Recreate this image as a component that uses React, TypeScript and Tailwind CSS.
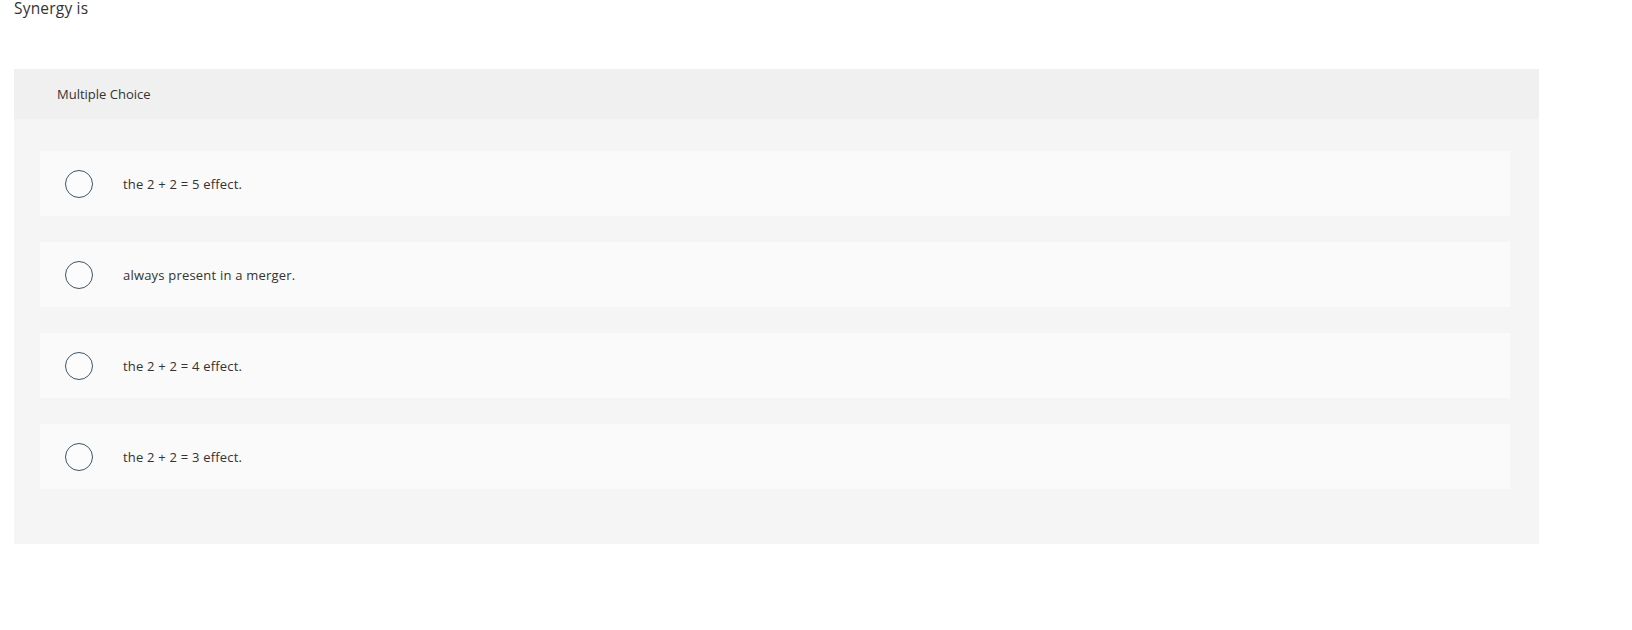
const choices = [
  'the 2 + 2 = 5 effect.',
  'always present in a merger.',
  'the 2 + 2 = 4 effect.',
  'the 2 + 2 = 3 effect.',
]

function Radio() {
  return (
    <span className="w-[28px] h-[28px] rounded-full border-[1.5px] border-[#3d5566] bg-[#fcfcfc] flex-shrink-0" />
  )
}

export default function App() {
  return (
    <div className="w-[1632px] h-[630px] bg-white text-[#333] font-['Open_Sans','Lato',sans-serif]">
      <p className="pl-[14px] text-[15.5px] leading-[15px] pt-[1px] tracking-[0.2px]">Synergy is</p>

      <div className="ml-[14px] mt-[53px] w-[1525px] bg-[#f5f5f5]">
        {/* Header */}
        <div className="h-[50px] flex items-center pl-[43px] pt-[2px] bg-[#f0f0f0] text-[13px]">
          Multiple Choice
        </div>

        {/* Options */}
        <div className="flex flex-col gap-[26px] pl-[26px] pr-[29px] pt-[32px] pb-[55px]">
          {choices.map((label) => (
            <label key={label} className="h-[65px] flex items-center pl-[25px] gap-[30px] bg-[#fafafa] text-[13px] tracking-[0.2px] cursor-pointer">
              <Radio />
              <span className="pt-[3px]">{label}</span>
            </label>
          ))}
        </div>
      </div>
    </div>
  )
}
